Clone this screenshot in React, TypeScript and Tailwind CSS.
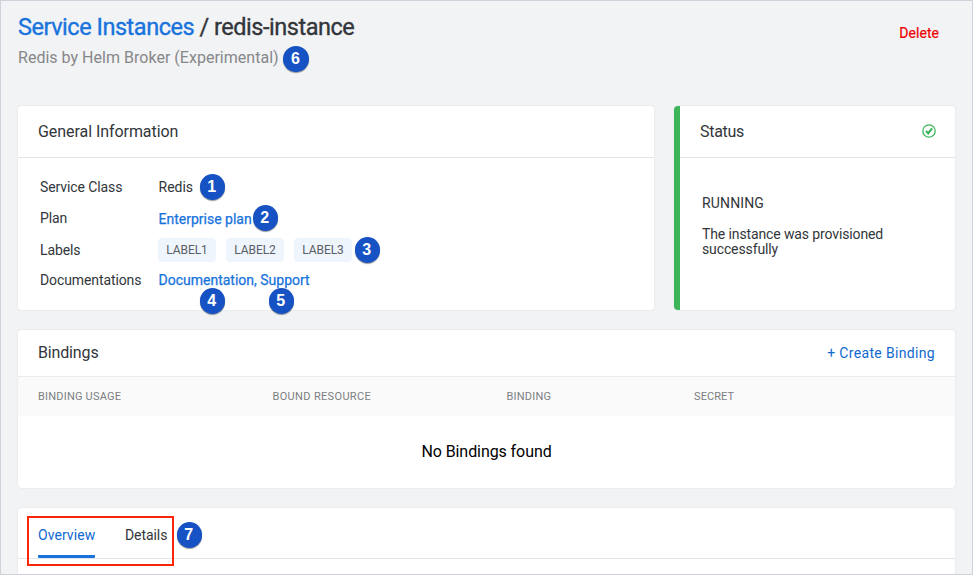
import type { ReactNode } from "react";

function Card({ className = "", children }: { className?: string; children: ReactNode }) {
  return (
    <section className={"rounded bg-white shadow-[0_0_2px_0_rgba(0,0,0,0.1)] " + className}>{children}</section>
  );
}

function Row({ label, className, children }: { label: string; className: string; children: ReactNode }) {
  return (
    <div className={"flex items-center " + className}>
      <div className="w-[118px] tracking-[-0.1px]">{label}</div>
      {children}
    </div>
  );
}

function Label({ children }: { children: ReactNode }) {
  return (
    <span className="flex h-6 w-[58px] items-center justify-center rounded bg-[#eef5fd] text-[12px] tracking-[-0.05px] text-[#5a5e66]">
      {children}
    </span>
  );
}

function Marker({ n, className }: { n: number; className: string }) {
  return (
    <span
      className={
        "absolute flex size-[25.5px] items-center justify-center rounded-full bg-[#1652c4] pr-px font-['Liberation_Sans',sans-serif] text-[16px] leading-none font-bold text-white shadow-[0_1px_1px_rgba(0,0,0,0.4)] " +
        className
      }
    >
      {n}
    </span>
  );
}

export default function App() {
  return (
    <div className="relative flex h-[575px] w-[973px] flex-col overflow-hidden border border-[#cfd2db] bg-[#f2f3f5] px-[17px] font-['Roboto',sans-serif] text-[14px] leading-4 text-[#32363a]">
      <header className="flex h-[105px] shrink-0 items-start justify-between pr-4">
        <div>
          <h1 className="mt-[11px] text-[23.5px] leading-[30px] tracking-[-0.47px] whitespace-nowrap [-webkit-text-stroke:0.35px]">
            <a className="text-[#1873dc]">Service Instances</a> / redis-instance
          </h1>
          <p className="mt-[6px] text-[16px] leading-5 tracking-[0.02px] text-[#868789]">Redis by Helm Broker (Experimental)</p>
        </div>
        <button className="mt-6 tracking-[0.05px] text-[#ee0000] [-webkit-text-stroke:0.2px]">Delete</button>
      </header>

      <div className="flex h-[204px] shrink-0 gap-5">
        <Card className="w-[636px]">
          <h2 className="flex h-[52px] items-center border-b border-[#e4e5e6] px-5 text-[16px] tracking-[-0.06px]">
            General Information
          </h2>
          <div className="px-[22px] pt-[17px]">
            <Row label="Service Class" className="h-[23px]">
              <span className="pl-[0.5px]">Redis</span>
            </Row>
            <Row label="Plan" className="mt-2 h-[24px]">
              <a className="pt-[2px] pl-[0.5px] text-[#1873dc] [-webkit-text-stroke:0.25px]">Enterprise plan</a>
            </Row>
            <Row label="Labels" className="mt-2 h-6">
              <div className="flex gap-[10px]">
                <Label>LABEL1</Label>
                <Label>LABEL2</Label>
                <Label>LABEL3</Label>
              </div>
            </Row>
            <Row label="Documentations" className="mt-[6px] h-6">
              <span className="pl-[0.5px] text-[#1873dc] [-webkit-text-stroke:0.25px]">
                <a>Documentation</a>, <a>Support</a>
              </span>
            </Row>
          </div>
        </Card>
        <Card className="flex flex-1 overflow-hidden">
          <div className="w-[6px] bg-[#3cb55b]" />
          <div className="flex-1">
            <div className="flex h-[52px] items-center justify-between border-b border-[#e4e5e6] pr-[19px] pl-5">
              <h2 className="text-[16px] tracking-[-0.3px]">Status</h2>
              <svg viewBox="0 0 14 14" className="mr-[0.5px] mb-px size-[14px]" fill="none" stroke="#3cb55b">
                <circle cx="7" cy="7" r="6.2" strokeWidth="1.3" />
                <path d="M4 7 6.2 9.3 10.1 4.4" strokeWidth="2.2" />
              </svg>
            </div>
            <div className="px-[22px] pt-[37px]">
              <p className="tracking-[0.15px]">RUNNING</p>
              <p className="mt-4 leading-[15px] tracking-[-0.12px]">
                The instance was provisioned
                <br />
                successfully
              </p>
            </div>
          </div>
        </Card>
      </div>

      <Card className="mt-5 h-[158px] shrink-0 overflow-hidden">
        <div className="flex h-[47px] items-center justify-between border-b border-[#ebebec] px-5">
          <h2 className="pb-px text-[16px] tracking-[-0.15px]">Bindings</h2>
          <button className="tracking-[0.33px] text-[#1069cf]">+ Create Binding</button>
        </div>
        <div className="grid h-[39px] grid-cols-[234.5px_234px_187.5px_1fr] items-center bg-[#fafafa] px-5 text-[11px] tracking-[0.2px] text-[#7b7e82]">
          <span>BINDING USAGE</span>
          <span className="tracking-[0.34px]">BOUND RESOURCE</span>
          <span>BINDING</span>
          <span className="tracking-[0.1px]">SECRET</span>
        </div>
        <p className="pt-[26px] text-center text-[16px] leading-5 tracking-[-0.08px] text-black">No Bindings found</p>
      </Card>

      <Card className="mt-5 h-[80px] shrink-0">
        <div className="flex h-[51px] gap-[30px] border-b border-[#e4e5e6] px-5">
          <a className="flex h-[50px] w-[57px] items-center rounded-b-[1px] border-b-[3px] border-[#1873dc] pt-[6px] tracking-[0.06px] text-[#1069cf]">
            Overview
          </a>
          <a className="flex h-[50px] items-center pt-[3px] tracking-[-0.08px]">Details</a>
        </div>
      </Card>

      <div className="absolute top-[515px] left-[26px] h-[50px] w-[147px] border-2 border-[#fb2605]" />
      <Marker n={6} className="top-[45px] left-[282.3px]" />
      <Marker n={1} className="top-[173px] left-[198.5px]" />
      <Marker n={2} className="top-[204px] left-[251.5px]" />
      <Marker n={3} className="top-[236px] left-[353.5px]" />
      <Marker n={4} className="top-[287px] left-[198.5px]" />
      <Marker n={5} className="top-[287px] left-[267.5px]" />
      <Marker n={7} className="top-[521px] left-[175.5px]" />
      <div className="absolute inset-x-0 bottom-0 -mb-px h-px bg-[#cfd2db]" />
    </div>
  );
}
